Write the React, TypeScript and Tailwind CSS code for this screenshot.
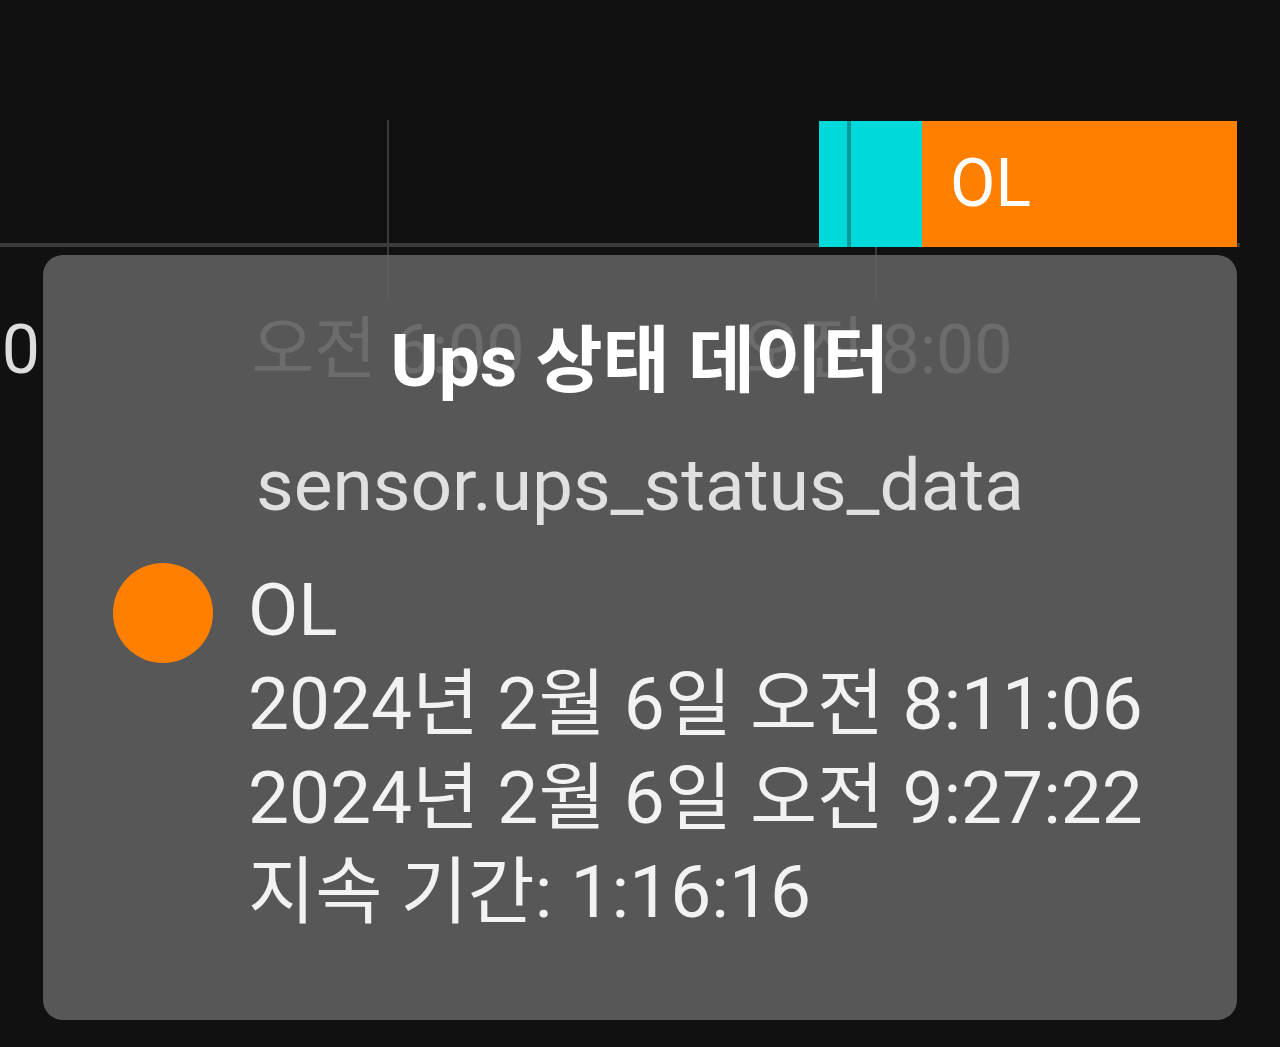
import React from 'react';

const font = { fontFamily: 'Roboto, "Noto Sans CJK KR", sans-serif' };

export default function App() {
  return (
    <div className="relative w-[1280px] h-[1047px] overflow-hidden bg-[#111111]" style={font}>
      {/* grid lines */}
      <div className="absolute left-[387px] top-[120px] h-[180px] w-[2px] bg-[#3a3a3a]" />
      <div className="absolute left-[875px] top-[247px] h-[53px] w-[2px] bg-[#3a3a3a]" />
      {/* axis */}
      <div className="absolute left-0 top-[243px] h-[4px] w-[1240px] bg-[#3c3c3c]" />

      {/* timeline bar */}
      <div className="absolute left-[819px] top-[121px] flex h-[126px] w-[418px]">
        <div className="h-full w-[28px] bg-[#00d9d9]" />
        <div className="h-full w-[4px] bg-[#009c9c]" />
        <div className="h-full w-[71px] bg-[#00d9d9]" />
        <div className="flex h-full flex-1 items-center bg-[#ff8000] pl-[28px]">
          <span className="text-[66px] leading-none text-white">OL</span>
        </div>
      </div>

      {/* axis labels */}
      <div className="absolute left-[-240px] top-[310px] flex h-[80px] w-[1256px] items-center text-[68px] text-[#dddddd]">
        <div className="w-[280px] text-right">오전 4:00</div>
        <div className="ml-[208px] w-[280px] text-center">오전 6:00</div>
        <div className="ml-[208px] w-[280px] text-center">오전 8:00</div>
      </div>

      {/* tooltip */}
      <div className="absolute left-[43px] top-[255px] h-[765px] w-[1194px] rounded-[20px] bg-[rgba(95,95,95,0.9)] pt-[59px] text-white">
        <div className="text-center text-[73px] font-bold leading-[94px]">Ups 상태 데이터</div>
        <div className="mt-[30px] text-center text-[73px] leading-[94px] text-[#e0e0e0]">
          sensor.ups_status_data
        </div>
        <div className="mt-[31px] flex pl-[70px]">
          <div className="h-[100px] w-[100px] shrink-0 rounded-full bg-[#ff8000]" />
          <div className="ml-[35px] text-[73px] leading-[94px] text-[#f2f2f2]">
            <div>OL</div>
            <div>2024년 2월 6일 오전 8:11:06</div>
            <div>2024년 2월 6일 오전 9:27:22</div>
            <div>지속 기간: 1:16:16</div>
          </div>
        </div>
      </div>
    </div>
  );
}
